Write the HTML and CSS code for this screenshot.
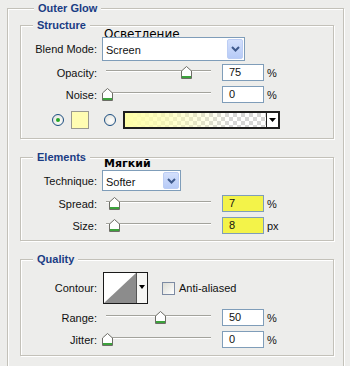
FILE: index.html
```html
<!DOCTYPE html>
<html lang="en">
<head>
    <meta charset="UTF-8">
    <title>Outer Glow</title>
    <link rel="stylesheet" href="styles.css">
</head>
<body>
    <fieldset class="dialog">
        <legend>Outer Glow</legend>

        <!-- Structure -->
        <fieldset class="group structure">
            <legend>Structure</legend>
            <div class="note">Осветление</div>
            <div class="row row-select">
                <span class="label">Blend Mode:</span>
                <div class="select select-wide">
                    <span>Screen</span>
                    <i class="drop"><svg width="9" height="6" viewBox="0 0 9 6"><polyline points="1,1 4.5,4.5 8,1" fill="none" stroke="#3f5a8c" stroke-width="2"/></svg></i>
                </div>
            </div>
            <div class="row row-first">
                <span class="label">Opacity:</span>
                <div class="slider"><svg class="thumb" style="left:79px" width="11" height="13" viewBox="0 0 11 13"><path d="M5.5 0.5 L10.5 5 L10.5 12.5 L0.5 12.5 L0.5 5 Z" fill="#fff" stroke="#6d6d66"/><rect x="1" y="10" width="9" height="2" fill="#3ca23c"/></svg></div>
                <span class="field">75</span>
                <span class="unit">%</span>
            </div>
            <div class="row">
                <span class="label">Noise:</span>
                <div class="slider"><svg class="thumb" style="left:0px" width="11" height="13" viewBox="0 0 11 13"><path d="M5.5 0.5 L10.5 5 L10.5 12.5 L0.5 12.5 L0.5 5 Z" fill="#fff" stroke="#6d6d66"/><rect x="1" y="10" width="9" height="2" fill="#3ca23c"/></svg></div>
                <span class="field">0</span>
                <span class="unit">%</span>
            </div>
            <div class="colors">
                <span class="radio checked"></span>
                <span class="swatch"></span>
                <span class="radio"></span>
                <div class="gradient">
                    <span class="gradient-fill"></span>
                    <span class="gradient-arrow"><svg width="7" height="4" viewBox="0 0 7 4"><path d="M0 0 H7 L3.5 4 Z" fill="#000"/></svg></span>
                </div>
            </div>
        </fieldset>

        <!-- Elements -->
        <fieldset class="group elements">
            <legend>Elements</legend>
            <div class="note note-bold">Мягкий</div>
            <div class="row row-technique">
                <span class="label">Technique:</span>
                <div class="select select-narrow">
                    <span>Softer</span>
                    <i class="drop"><svg width="9" height="6" viewBox="0 0 9 6"><polyline points="1,1 4.5,4.5 8,1" fill="none" stroke="#3f5a8c" stroke-width="2"/></svg></i>
                </div>
            </div>
            <div class="row row-spread">
                <span class="label">Spread:</span>
                <div class="slider"><svg class="thumb" style="left:7px" width="11" height="13" viewBox="0 0 11 13"><path d="M5.5 0.5 L10.5 5 L10.5 12.5 L0.5 12.5 L0.5 5 Z" fill="#fff" stroke="#6d6d66"/><rect x="1" y="10" width="9" height="2" fill="#3ca23c"/></svg></div>
                <span class="field hot">7</span>
                <span class="unit">%</span>
            </div>
            <div class="row">
                <span class="label">Size:</span>
                <div class="slider"><svg class="thumb" style="left:7px" width="11" height="13" viewBox="0 0 11 13"><path d="M5.5 0.5 L10.5 5 L10.5 12.5 L0.5 12.5 L0.5 5 Z" fill="#fff" stroke="#6d6d66"/><rect x="1" y="10" width="9" height="2" fill="#3ca23c"/></svg></div>
                <span class="field hot">8</span>
                <span class="unit">px</span>
            </div>
        </fieldset>

        <!-- Quality -->
        <fieldset class="group quality">
            <legend>Quality</legend>
            <div class="row row-contour">
                <span class="label">Contour:</span>
                <svg class="contour" width="45" height="32" viewBox="0 0 45 32">
                    <rect x="0.5" y="0.5" width="44" height="31" fill="#fff" stroke="#1a1a1a"/>
                    <path d="M1 31 L33 1 L33 31 Z" fill="#8c8c8c"/>
                    <line x1="33.5" y1="1" x2="33.5" y2="31" stroke="#555"/>
                    <rect x="34" y="1" width="10" height="30" fill="#f6f6f4"/>
                    <path d="M36 13 H42 L39 17 Z" fill="#000"/>
                </svg>
                <span class="check"></span>
                <span class="check-label">Anti-aliased</span>
            </div>
            <div class="row row-range">
                <span class="label">Range:</span>
                <div class="slider"><svg class="thumb" style="left:53px" width="11" height="13" viewBox="0 0 11 13"><path d="M5.5 0.5 L10.5 5 L10.5 12.5 L0.5 12.5 L0.5 5 Z" fill="#fff" stroke="#6d6d66"/><rect x="1" y="10" width="9" height="2" fill="#3ca23c"/></svg></div>
                <span class="field">50</span>
                <span class="unit">%</span>
            </div>
            <div class="row">
                <span class="label">Jitter:</span>
                <div class="slider"><svg class="thumb" style="left:0px" width="11" height="13" viewBox="0 0 11 13"><path d="M5.5 0.5 L10.5 5 L10.5 12.5 L0.5 12.5 L0.5 5 Z" fill="#fff" stroke="#6d6d66"/><rect x="1" y="10" width="9" height="2" fill="#3ca23c"/></svg></div>
                <span class="field">0</span>
                <span class="unit">%</span>
            </div>
        </fieldset>
    </fieldset>
</body>
</html>
```

FILE: styles.css
```css
* {
    margin: 0;
    padding: 0;
    box-sizing: border-box;
}

body {
    background: #ededeb;
    font-family: "Liberation Sans", Arial, sans-serif;
    font-size: 11px;
    color: #111;
    overflow: hidden;
}

fieldset {
    border: 1px solid #c3c1b9;
    box-shadow: inset 1px 1px 0 #fff, 1px 1px 0 #fff;
}

legend {
    font-weight: bold;
    color: #1a3c84;
    line-height: 13px;
    padding: 0 4px;
    margin-left: 12px;
    background: #ededeb;
}

/* Outer dialog frame */
.dialog {
    margin: 2px 0 0 7px;
    width: 337px;
    height: 380px;
    padding: 4px 9px 0 12px;
}

.dialog > legend {
    margin-left: 14px;
}

.group {
    width: 314px;
}

.structure {
    padding-bottom: 9px;
}

.elements {
    margin-top: 12px;
    padding-bottom: 6px;
}

.quality {
    margin-top: 12px;
    padding-bottom: 7px;
}

/* Annotations written over the dialog */
.note {
    margin: -4px 0 0 83px;
    height: 9px;
    line-height: 12px;
    font-family: "DejaVu Sans", sans-serif;
    font-size: 12px;
    color: #000;
}

.note-bold {
    margin-top: -6px;
    height: 12px;
    font-size: 11px;
    font-weight: bold;
}

/* Rows */
.row {
    display: flex;
    align-items: center;
    height: 17px;
    margin-top: 5px;
}

.row-select {
    height: 24px;
    margin-top: 0;
}

.row-first {
    margin-top: 3px;
}

.row-technique {
    height: 21px;
    margin-top: 0;
}

.row-spread {
    margin-top: 4px;
}

.row-contour {
    height: 32px;
    margin-top: 6px;
}

.label {
    width: 76px;
    margin-right: 5px;
    text-align: right;
    color: #111;
}

/* Drop-down */
.select {
    display: flex;
    align-items: center;
    height: 100%;
    background: #fff;
    border: 1px solid #7f9db9;
    padding: 1px 1px 1px 3px;
}

.select span {
    flex: 1;
    padding-top: 2px;
}

.select-wide {
    width: 143px;
}

.select-narrow {
    width: 79px;
}

.drop {
    display: flex;
    align-items: center;
    justify-content: center;
    width: 16px;
    height: 100%;
    background: linear-gradient(#d4e0fc, #b7cbf7);
    border: 1px solid #bccdf4;
    border-radius: 2px;
}

/* Slider */
.slider {
    position: relative;
    width: 120px;
    height: 17px;
    background:
        linear-gradient(#a3a39c, #a3a39c) 4px 6px / 105px 1px no-repeat,
        linear-gradient(#fff, #fff) 4px 7px / 105px 1px no-repeat;
}

.thumb {
    position: absolute;
    top: 2px;
}

/* Number fields */
.field {
    width: 42px;
    height: 17px;
    border: 1px solid #7f9db9;
    background: #fff;
    padding-left: 6px;
    line-height: 15px;
}

.field.hot {
    background: #f3f349;
}

.unit {
    margin-left: 3px;
}

/* Colour row */
.colors {
    display: flex;
    align-items: center;
    height: 18px;
    margin-top: 8px;
    padding-left: 31px;
}

.radio {
    width: 12px;
    height: 12px;
    border: 1px solid #1d4f82;
    border-radius: 50%;
    background: radial-gradient(circle at 60% 60%, #fff, #dcdcd4);
    display: flex;
    align-items: center;
    justify-content: center;
}

.radio.checked::after {
    content: "";
    width: 4px;
    height: 4px;
    border-radius: 50%;
    background: #26a626;
}

.swatch {
    width: 18px;
    height: 18px;
    margin: 0 15px 0 7px;
    border: 1px solid #9a9a90;
    background: #fffdb2;
}

.gradient {
    display: flex;
    width: 157px;
    height: 18px;
    margin-left: 7px;
    border: 2px solid #1e1e1e;
}

.gradient-fill {
    flex: 1;
    background:
        linear-gradient(to right, #ffffa6 0%, rgba(255, 255, 170, 0.6) 35%, rgba(255, 255, 170, 0) 75%),
        repeating-conic-gradient(#d6d6d6 0 25%, #fff 0 50%) 0 0 / 8px 8px;
}

.gradient-arrow {
    width: 12px;
    display: flex;
    align-items: center;
    justify-content: center;
    background: #fff;
    border-left: 1px solid #1e1e1e;
}

/* Quality row */
.contour {
    margin-left: 1px;
}

.check {
    width: 13px;
    height: 13px;
    margin: 0 4px 0 14px;
    border: 1px solid #7d8ba3;
    background: linear-gradient(135deg, #dcdcd4, #fff);
}

.check-label {
    color: #111;
}
```
